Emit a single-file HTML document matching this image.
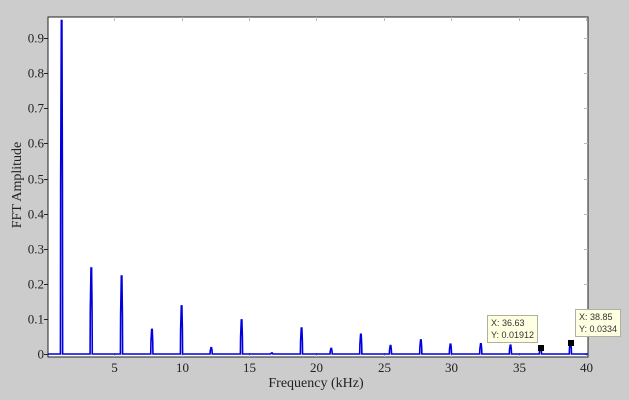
<!DOCTYPE html>
<html><head><style>
html,body{margin:0;padding:0;background:#cccccc;}
body{width:629px;height:400px;position:relative;overflow:hidden;font-family:"Liberation Serif",serif;}
svg{position:absolute;left:0;top:0;}
.tip{position:absolute;background:#ffffe1;border:1px solid #b0b0a0;font-family:"Liberation Sans",sans-serif;font-size:9px;color:#333;line-height:12px;padding:1px 3px;}
</style></head><body>
<svg id="s" width="629" height="400" viewBox="0 0 629 400" xmlns="http://www.w3.org/2000/svg">
<rect x="48" y="17" width="540" height="340" fill="#fff" stroke="#222" stroke-width="1"/>
<g id="ticks" stroke="#222" stroke-width="1"></g>
<g id="lab" font-family="Liberation Serif, serif" font-size="13" fill="#222"></g>
<path id="p" fill="none" stroke="#0000e0" stroke-width="1.6"/>
<text x="21" y="185" font-size="14" fill="#222" text-anchor="middle" transform="rotate(-90 21 185)" font-family="Liberation Serif, serif">FFT Amplitude</text>
<text x="316" y="387" font-size="14" fill="#222" text-anchor="middle" font-family="Liberation Serif, serif">Frequency (kHz)</text>
<rect x="538" y="345" width="6" height="6" fill="#000"/>
<rect x="568" y="340" width="6" height="6" fill="#000"/>
</svg>
<div class="tip" style="left:487px;top:315px;">X: 36.63<br>Y: 0.01912</div>
<div class="tip" style="left:575px;top:309px;">X: 38.85<br>Y: 0.0334</div>
<script>
var X=f=>46.8+13.48*f, Y=a=>354-351*a;
var t='',l='';
for(var i=0;i<=9;i++){var y=Y(i/10);y=Math.round(y)+0.5;
t+='<line x1="44" y1="'+y+'" x2="48" y2="'+y+'"/><line x1="588" y1="'+y+'" x2="584" y2="'+y+'" stroke="#bbb"/>';
l+='<text x="44" y="'+(y+4)+'" text-anchor="end">'+(i==0?'0':(i/10).toString())+'</text>';}
for(var k=5;k<=40;k+=5){var x=Math.round(X(k))+0.5;
t+='<line x1="'+x+'" y1="357" x2="'+x+'" y2="353" stroke="#bbb"/><line x1="'+x+'" y1="17" x2="'+x+'" y2="21" stroke="#bbb"/>';
l+='<text x="'+x+'" y="372" text-anchor="middle">'+k+'</text>';}
document.getElementById('ticks').innerHTML=t;document.getElementById('lab').innerHTML=l;
var pk=[[1.1,.95],[3.3,.245],[5.55,.222],[7.8,.07],[10,.137],[12.2,.018],[14.45,.097],[16.7,.003],[18.9,.074],[21.1,.016],[23.3,.056],[25.5,.024],[27.75,.04],[29.95,.028],[32.2,.029],[34.4,.025],[36.63,.019],[38.85,.0334]];
var d='M48,354';
pk.forEach(function(p){var x=X(p[0]),b=354,h=Y(p[1]),m=Y(p[1]/2);
d+=' L'+(x-1.2)+','+b+' L'+(x-1)+','+m+' L'+(x-0.3)+','+h+' L'+(x+0.3)+','+h+' L'+(x+0.8)+','+m+' L'+(x+1)+','+b;});
d+=' L588,354';
document.getElementById('p').setAttribute('d',d);
</script>
</body></html>
